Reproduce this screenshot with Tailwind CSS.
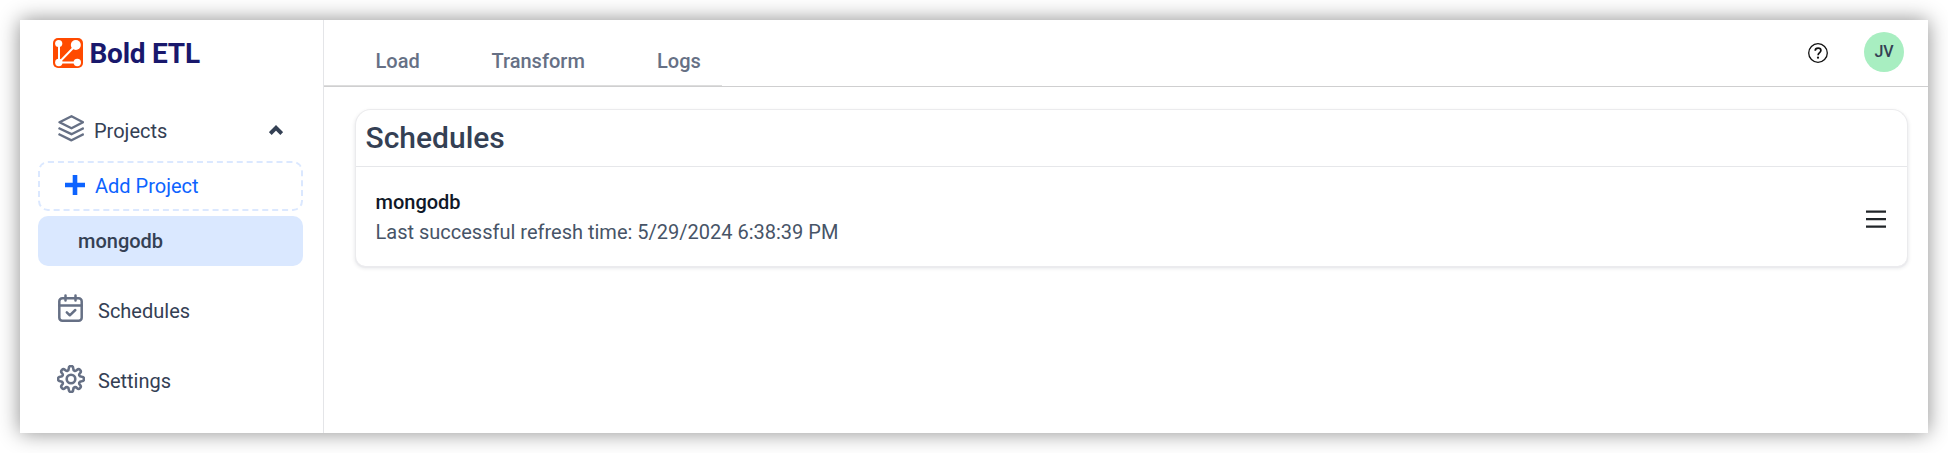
<!DOCTYPE html>
<html lang="en">
<head>
<meta charset="utf-8">
<title>Bold ETL</title>
<script src="https://cdn.jsdelivr.net/npm/@tailwindcss/browser@4"></script>
</head>
<body class="bg-white p-5 font-['Roboto',sans-serif] text-[20px] leading-[30px] text-[#344054]">
<div class="flex h-[413px] w-[1908px] bg-white shadow-[0_0_20px_rgba(0,0,0,0.45)]">
  <aside class="flex w-[304px] shrink-0 flex-col border-r border-[#e4e5e8] pt-[18px] pr-5 pl-[18px]">
    <div class="flex h-[30px] items-center gap-[6.500px] pl-[15px]">
      <svg class="size-[30px]" viewBox="0 0 30 30" fill="#fff"><rect width="30" height="30" rx="5" fill="#ff4a00"/><g stroke="#fff" stroke-width="2" fill="none"><path d="M6 6v18.500h18M6 24.500 23 7"/></g><circle cx="5.700" cy="5.500" r="3.600"/><circle cx="22.800" cy="7" r="5"/><circle cx="5.800" cy="24.500" r="3.700"/><circle cx="24.300" cy="24.500" r="3.700"/></svg>
      <span class="mt-[2px] text-[28px] font-bold tracking-[-0.250px] text-[#19186c]">Bold ETL</span>
    </div>
    <nav class="mt-[43px] flex flex-col">
      <div class="flex h-[50px] items-start pt-[5px] pl-5">
        <svg class="-mt-[2px] h-[28px] w-[26px]" viewBox="0 0 26 28" fill="none" stroke="#667085" stroke-width="2.400" stroke-linejoin="round"><path d="M13.500 2.200 25 8.200 13.500 14.200 1.500 8.200Z"/><path d="M.5 14 13.500 20.200 25.800 14M.5 20 13.500 26.300 25.800 20"/></svg>
        <span class="ml-[10px]">Projects</span>
        <svg class="mt-[9px] mr-5 ml-auto h-[10px] w-[14px]" viewBox="0 0 14 10" fill="none" stroke="#344054" stroke-width="3.900"><path d="M1.300 8.500 7 2.800l5.700 5.700"/></svg>
      </div>
      <div class="flex h-[50px] items-center rounded-[10px] border-2 border-dashed border-[#dbe8ff] pl-[25px] text-[#0d63ff]">
        <svg class="-mt-[2px] size-5" viewBox="0 0 20 20" fill="#0d63ff"><path d="M7.700 0h4.600v7.700H20v4.600h-7.700V20H7.700v-7.700H0V7.700h7.700z"/></svg>
        <span class="ml-[10px]">Add Project</span>
      </div>
      <div class="mt-[5px] flex h-[50px] items-center rounded-[10px] bg-[#dae8ff] pl-10 font-medium">mongodb</div>
      <div class="mt-[28px] flex h-[34px] items-center pl-5">
        <svg class="-mt-[7px] h-[28px] w-[25px]" viewBox="0 0 25 28" fill="none" stroke="#667085" stroke-width="2.500" stroke-linecap="round" stroke-linejoin="round"><rect x="1.300" y="4.300" width="22.400" height="22.400" rx="3"/><path d="M1.500 11.500h22M7.500 1.500v5M17.500 1.500v5M8.800 18.300l3 3 5.500-5.300"/></svg>
        <span class="ml-[15px]">Schedules</span>
      </div>
      <div class="mt-[36px] flex h-[34px] items-center pl-[19px]">
        <svg class="-mt-[5px] size-[28px]" viewBox="0 0 28 28" fill="none" stroke="#667085" stroke-width="2.600" stroke-linejoin="round"><circle cx="14" cy="14" r="4.300"/><path d="M11.800 3.200a2.200 2.200 0 0 1 4.400 0c0 2.600 2.100 3.500 3.900 1.600a2.200 2.200 0 0 1 3.100 3.100c-1.900 1.800-1 3.900 1.600 3.900a2.200 2.200 0 0 1 0 4.400c-2.600 0-3.500 2.100-1.600 3.900a2.200 2.200 0 0 1-3.100 3.100c-1.800-1.900-3.900-1-3.900 1.600a2.200 2.200 0 0 1-4.400 0c0-2.600-2.100-3.500-3.900-1.600a2.200 2.200 0 0 1-3.100-3.100c1.900-1.800 1-3.900-1.600-3.900a2.200 2.200 0 0 1 0-4.400c2.600 0 3.500-2.100 1.600-3.900a2.200 2.200 0 0 1 3.100-3.100c1.800 1.900 3.900 1 3.900-1.600Z"/></svg>
        <span class="ml-[13px]">Settings</span>
      </div>
    </nav>
  </aside>
  <main class="flex min-w-0 flex-1 flex-col">
    <header class="flex h-[67px] items-start justify-between border-b border-[#cfcfd0]">
      <nav class="flex h-[66px] w-[398px] border-b border-[#dddddd] pt-[26px] pl-[51.500px] font-medium text-[#667085]">
        <span class="w-[116px]">Load</span>
        <span class="w-[165.500px]">Transform</span>
        <span>Logs</span>
      </nav>
      <div class="flex items-center gap-9 pt-3 pr-6">
        <svg class="mt-[2px] size-5" viewBox="0 0 20 20" fill="none" stroke="#111" stroke-width="1.300"><circle cx="10" cy="10" r="9.300"/><path stroke-width="1.700" d="M7.200 7.700c.1-1.700 1.300-2.500 2.900-2.500 1.700 0 2.800.9 2.800 2.300 0 2-2.800 2.200-2.800 4.700"/><circle cx="10" cy="14.700" r="1.100" fill="#111" stroke="none"/></svg>
        <div class="flex size-10 items-center justify-center rounded-full bg-[#a8eec1] text-[16px] font-medium">JV</div>
      </div>
    </header>
    <section class="mt-[22px] ml-[30.500px] h-[157px] w-[1553px] rounded-t-[16px] rounded-b-[10px] border border-b-0 border-[#ebebed] bg-white shadow-[0_2px_0_#ebebee,0_2px_4px_rgba(16,24,40,0.12)]">
      <h1 class="flex h-[57px] items-center border-b border-[#e6e7ea] pl-[10px] text-[30px] font-medium">Schedules</h1>
      <div class="flex items-center justify-between pt-5 pr-[21px] pl-5">
        <div>
          <div class="font-medium text-[#101828]">mongodb</div>
          <div class="text-[#475467]">Last successful refresh time: 5/29/2024 6:38:39 PM</div>
        </div>
        <svg class="mt-[4px] h-[18px] w-5" viewBox="0 0 20 18" fill="#212529"><path d="M0 .4h20v2.400H0zM0 7.900h20v2.400H0zM0 15.400h20v2.400H0z"/></svg>
      </div>
    </section>
  </main>
</div>
</body>
</html>
